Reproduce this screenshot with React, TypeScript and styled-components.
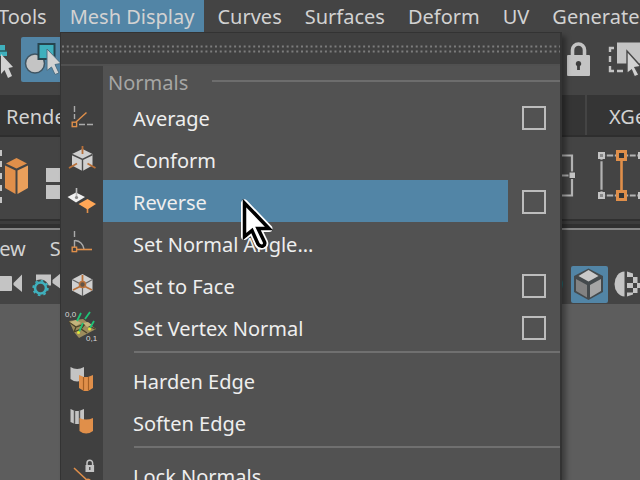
import React from 'react';
import styled, { createGlobalStyle } from 'styled-components';

const GlobalStyle = createGlobalStyle`
  * { box-sizing: border-box; }
  body { margin: 0; background: #5d5d5d; }
  button {
    margin: 0;
    padding: 0;
    border: 0;
    background: none;
    color: inherit;
    font: inherit;
    text-align: left;
    white-space: nowrap;
  }
  svg { display: block; flex: none; }
`;

const ORANGE = '#e08f4a';
const GREY = '#c4c4c4';
const TEAL = '#3fb0bd';

const Page = styled.div`
  position: relative;
  display: flex;
  flex-direction: column;
  height: 100vh;
  overflow: hidden;
  background: #5d5d5d;
  color: #d2d2d2;
  font-family: 'Noto Sans', 'Open Sans', sans-serif;
  font-size: 20px;
  line-height: 28px;
`;

const MenuBar = styled.nav`
  display: flex;
  flex: none;
  gap: 3px;
  height: 33px;
  margin-left: -12px;
  background: #444444;
`;

const MenuBarItem = styled.button<{ $open?: boolean }>`
  flex: none;
  height: 32px;
  padding: 2px 10px 0;
  background: ${(p) => (p.$open ? '#5285a6' : 'transparent')};
`;

const Bar = styled.div<{ $height: number }>`
  display: flex;
  flex: none;
  justify-content: space-between;
  height: ${(p) => p.$height}px;
  background: #444444;
`;

const Cluster = styled.div`
  display: flex;
  flex: none;
`;

const Tabs = styled.div`
  display: flex;
  flex: none;
  gap: 2px;
  height: 42px;
  background: #444444;
  border-bottom: 2px solid #2e2e2e;
  overflow: hidden;
`;

const Tab = styled.button<{ $grow?: boolean }>`
  flex: ${(p) => (p.$grow ? '1 1 auto' : '0 0 53px')};
  min-width: 0;
  padding: 4px 0 0 ${(p) => (p.$grow ? 6 : 22)}px;
  overflow: hidden;
  background: #353535;
`;

const Divider = styled.div`
  flex: none;
  height: 11px;
  background: #3c3c3c;
  border-top: 2px solid #303030;
  border-bottom: 2px solid #858585;
  box-shadow: inset 0 -4px 0 #303030;
`;

const PanelMenu = styled.nav`
  display: flex;
  flex: none;
  gap: 24px;
  height: 35px;
  margin-left: -18px;
  padding-top: 2px;
  background: #444444;
`;

const Dropdown = styled.section`
  position: absolute;
  top: 32px;
  bottom: 0;
  left: 60px;
  width: 502px;
  overflow: hidden;
  border: solid #333333;
  border-width: 1px 2px 0 1px;
  background: #404040;
  box-shadow: 4px 4px 5px rgba(0, 0, 0, 0.35);
  color: #eeeeee;
`;

const TearOff = styled.button`
  display: block;
  width: 100%;
  height: 31px;
`;

const MenuBody = styled.div`
  border-top: 2px solid #505050;
  background: linear-gradient(to right, #404040 42px, #525252 42px);
`;

const GroupTitle = styled.h2`
  display: flex;
  gap: 24px;
  height: 30px;
  margin: 0;
  padding: 3px 0 0 47px;
  color: #a6a6a4;
  font-size: 20px;
  font-weight: 400;
  line-height: 28px;

  &::after {
    content: '';
    flex: 1;
    height: 2px;
    margin-top: 11px;
    background: #6d6d6d;
  }
`;

const Row = styled.div`
  display: grid;
  grid-template-columns: 42px 1fr 52px;
  align-items: center;
  height: 42px;
`;

const Command = styled.button<{ $hot?: boolean }>`
  height: 42px;
  padding: 4px 0 0 30px;
  background: ${(p) => (p.$hot ? '#5285a6' : 'transparent')};
`;

const OptionBox = styled.button`
  justify-self: center;
  width: 24px;
  height: 24px;
  margin-top: 2px;
  border: 2px solid #bdbdbd;
`;

const Separator = styled.hr`
  height: 2px;
  margin: 0 0 0 73px;
  border: 0;
  background: #707070;
`;

const SeparatorSlot = styled.div`
  height: 11px;
  padding-top: 3px;
`;

const Pointer = styled.svg`
  position: absolute;
  top: 196px;
  left: 238px;
  pointer-events: none;
`;

function Glyph({ children }: { children: React.ReactNode }) {
  return (
    <svg width="42" height="42" viewBox="0 0 42 42" aria-hidden="true">
      {children}
    </svg>
  );
}

const HEX = 'M21.5 11 L31.5 16 V27.5 L21.5 33 L11 27.5 V16 Z';

const AverageIcon = () => (
  <Glyph>
    <path d="M13.5 10v6M13.5 18v5M18 28.5h6M26 28.5h6" stroke="#aaaaaa" strokeWidth="1.4" />
    <path d="M15 26L25.5 16.5" stroke={ORANGE} strokeWidth="1.4" />
    <rect x="11.2" y="26.2" width="4.4" height="4.4" fill="#404040" stroke={ORANGE} strokeWidth="1.4" />
  </Glyph>
);

const ConformIcon = () => (
  <Glyph>
    <path d={HEX} fill="#d0d0d0" />
    <path d="M11 16.5L21.5 21.5L31.5 16.5M21.5 21.5V33" stroke="#4a4a4a" strokeWidth="1.4" fill="none" />
    <path d="M21.5 8v8M8 30l8-4.5M34.5 30l-8-4.5" stroke="#b9713a" strokeWidth="1.8" />
  </Glyph>
);

const ReverseIcon = () => (
  <Glyph>
    <path d="M6.5 17L15 12.5L24 17L15 22.5Z" fill="#f0f0f0" />
    <path d="M15.5 8v9" stroke="#bbbbbb" strokeWidth="1.6" />
    <circle cx="15.5" cy="17.5" r="1.6" fill="#888888" />
    <path d="M26.5 26v7" stroke={ORANGE} strokeWidth="1.6" />
    <path d="M17.5 24L26.5 19L35 24L26.5 29.5Z" fill="#ffa757" />
  </Glyph>
);

const AngleIcon = () => (
  <Glyph>
    <path d="M13.5 9v6M13.5 18v7" stroke="#aaaaaa" strokeWidth="1.4" />
    <path d="M14 18.5C19 19 22 22 23 27" stroke="#aaaaaa" strokeWidth="1.4" fill="none" />
    <path d="M16 27.5h15" stroke={ORANGE} strokeWidth="1.6" />
    <rect x="11.2" y="25.2" width="4.4" height="4.4" fill="#404040" stroke={ORANGE} strokeWidth="1.4" />
  </Glyph>
);

const FaceIcon = () => (
  <Glyph>
    <path d="M21.5 10L31.5 15.5V26.5L21.5 32L11 26.5V15.5Z" fill="#d0d0d0" />
    <path d="M11 15.5L21.5 21L31.5 15.5M21.5 21V32" stroke="#666666" strokeWidth="1.2" fill="none" />
    <path d="M21.5 11v7M19 22.5l-7 3.5M24 22.5l7 3.5" stroke="#b9713a" strokeWidth="1.8" />
    <circle cx="21.5" cy="20.5" r="3" fill="#625548" stroke="#b9713a" strokeWidth="1.6" />
  </Glyph>
);

const VertexIcon = () => (
  <Glyph>
    <path d="M8 15L22 13L35 23L18 32L13 26Z" fill="#9c8c5c" />
    <path d="M8 16l7 5l9-3l10 5M13 26l7-3l6 4M15 21l-2 5M24 18l-4 5" stroke="#4b4329" strokeWidth="1.3" fill="none" />
    <path d="M9 16l6-2l5 3l-5 3ZM22 17l5-1l4 3l-5 2Z" fill="#c4b47c" />
    <path d="M16 15l4-8M24 13l5-7M18 26l4-9M29 22l4-7" stroke="#20c477" strokeWidth="1.8" />
    <circle cx="17.5" cy="26.5" r="1.5" fill="#e4e53a" />
    <circle cx="28.5" cy="23" r="1.5" fill="#e4e53a" />
    <text x="4" y="11" fill="#d8d8d8" fontSize="8" fontFamily="Liberation Sans, sans-serif">0,0</text>
    <text x="25" y="35" fill="#d8d8d8" fontSize="8" fontFamily="Liberation Sans, sans-serif">0,1</text>
  </Glyph>
);

const HardenIcon = () => (
  <Glyph>
    <path d="M9.5 8Q16 12 23 8V20Q16 25 9.5 20Z" fill={GREY} />
    <path d="M18 16L23 18L27 18L32 16V29L27 32H23L18 29Z" fill={ORANGE} />
    <path d="M22.5 18v13.5M27.5 18v13.5" stroke="#a45f25" strokeWidth="1.2" />
  </Glyph>
);

const SoftenIcon = () => (
  <Glyph>
    <path d="M9.5 8L14 10H18L23 8V21L18 23H14L9.5 21Z" fill={GREY} />
    <path d="M13.5 9v14M18.5 9v14" stroke="#555555" strokeWidth="1.4" />
    <path d="M18.5 17Q25 20 32 17V30Q25 35 18.5 30Z" fill={ORANGE} />
  </Glyph>
);

const LockNormalsIcon = () => (
  <Glyph>
    <path d="M13 14L28 28" stroke={ORANGE} strokeWidth="1.5" />
    <circle cx="27" cy="27.5" r="3" fill={ORANGE} />
    <path d="M26 12v-3a2.8 2.8 0 0 1 5.6 0v3" stroke={GREY} strokeWidth="1.5" fill="none" />
    <rect x="24.5" y="11" width="8.6" height="7" fill={GREY} />
    <rect x="28" y="13" width="1.5" height="3" fill="#555555" />
  </Glyph>
);

type Entry = { label: string; icon: () => React.ReactElement; option?: boolean; hot?: boolean };

const groups: Entry[][] = [
  [
    { label: 'Average', icon: AverageIcon, option: true },
    { label: 'Conform', icon: ConformIcon },
    { label: 'Reverse', icon: ReverseIcon, option: true, hot: true },
    { label: 'Set Normal Angle...', icon: AngleIcon },
    { label: 'Set to Face', icon: FaceIcon, option: true },
    { label: 'Set Vertex Normal', icon: VertexIcon, option: true },
  ],
  [
    { label: 'Harden Edge', icon: HardenIcon },
    { label: 'Soften Edge', icon: SoftenIcon },
  ],
  [{ label: 'Lock Normals', icon: LockNormalsIcon }],
];

const menus = ['Tools', 'Mesh Display', 'Curves', 'Surfaces', 'Deform', 'UV', 'Generate'];

function SelectionTools() {
  return (
    <svg width="64" height="62" viewBox="0 33 64 62" aria-hidden="true">
      <path d="M0 45h5v6h2v5H0Z" fill={TEAL} />
      <path d="M0 51h7" stroke="#2d5d62" strokeWidth="1.5" />
      <path d="M1 54L13 67L8.5 68L12 76L8 78L4.5 70L1 74Z" fill="#d2d2d2" />
      <rect x="21" y="37" width="50" height="45" rx="2" fill="#5285a6" />
      <circle cx="35" cy="63.5" r="9.5" fill={GREY} stroke="#3f5563" strokeWidth="1.5" />
      <rect x="38.5" y="44" width="16" height="15" fill={TEAL} stroke="#26444e" strokeWidth="2" />
      <path d="M47 49L61 63.5L55 64.5L59 73L55 74.5L51.5 67L47 70.5Z" fill="#d2d2d2" stroke="#4c6f84" strokeWidth="1" />
    </svg>
  );
}

function LockTools() {
  return (
    <svg width="80" height="62" viewBox="560 33 80 62" aria-hidden="true">
      <path d="M572.5 57v-7a6 6 0 0 1 12 0v7" fill="none" stroke={GREY} strokeWidth="3.6" />
      <rect x="567" y="55" width="23" height="21" rx="1" fill={GREY} />
      <path d="M578.5 61a2.8 2.8 0 0 1 1.4 5.2V70h-2.8v-3.8A2.8 2.8 0 0 1 578.5 61Z" fill="#3d3d3d" />
      <path d="M614 48H610V52M610 56v6M610 66v5h4M617 71h6" fill="none" stroke={GREY} strokeWidth="2.4" />
      <rect x="617" y="42.5" width="23" height="21" fill={GREY} />
      <path d="M627 51L641 66.5L635 67.5L639 75L634.5 77L631.5 70L627 73.5Z" fill="#d2d2d2" stroke="#484848" strokeWidth="1.4" />
    </svg>
  );
}

function ShelfLeft() {
  return (
    <svg width="64" height="82" viewBox="0 137 64 82" aria-hidden="true">
      <path d="M0 150h2v6H0ZM0 161h2v6H0ZM0 173h2v6H0ZM0 185h2v6H0ZM0 197h2v6H0Z" fill={GREY} />
      <path d="M16.5 158L27 163.5L16.5 168.5L6 163.5Z" fill={ORANGE} />
      <path d="M5 165.5L15.5 170.5V194L5 188Z" fill={ORANGE} />
      <path d="M28 165.5L17.5 170.5V194L28 188Z" fill="#eba05b" />
      <rect x="46" y="168" width="16" height="14" fill={GREY} />
      <rect x="46" y="185" width="16" height="14" fill={GREY} />
    </svg>
  );
}

function ShelfRight() {
  return (
    <svg width="80" height="82" viewBox="560 137 80 82" aria-hidden="true">
      <path d="M560 155.5h12V195.5h-12M560 175.5h12M601 155.5h39M601 195.5h39M601.5 156v40" fill="none" stroke="#b2b2b2" strokeWidth="2.2" />
      <path d="M621.5 156v40" stroke={ORANGE} strokeWidth="2.6" />
      <path d="M569 172h6.5v6.5H569Z" fill={GREY} stroke="#404040" strokeWidth="1" />
      <g fill="#888888" stroke={GREY} strokeWidth="2">
        <rect x="599" y="153" width="5" height="5" />
        <rect x="599" y="193" width="5" height="5" />
        <rect x="639" y="153" width="5" height="5" />
        <rect x="639" y="193" width="5" height="5" />
      </g>
      <path d="M606 152v7M606 192v7M614 152v7M614 192v7M629 152v7M629 192v7M636.5 152v7M636.5 192v7M598 160.5h7M598 190.5h7" stroke="#444444" strokeWidth="1.6" />
      <g fill="#353535" stroke={ORANGE} strokeWidth="3">
        <rect x="617.5" y="151.5" width="8" height="8" />
        <rect x="617.5" y="191.5" width="8" height="8" />
      </g>
    </svg>
  );
}

function CameraTools() {
  return (
    <svg width="64" height="39" viewBox="0 265 64 39" aria-hidden="true">
      <rect x="-6" y="276" width="18" height="15" rx="1" fill={GREY} />
      <path d="M13.5 283L22 274.5V292L13.5 285Z" fill={GREY} />
      <rect x="36" y="274.5" width="15" height="11" fill={GREY} />
      <path d="M52.5 280L61 273V289L52.5 283Z" fill={GREY} />
      <circle cx="40.5" cy="288" r="8.5" fill="#444444" />
      <circle cx="40.5" cy="288" r="5.5" fill="none" stroke={TEAL} strokeWidth="2.6" />
      <circle cx="40.5" cy="288" r="7.3" fill="none" stroke={TEAL} strokeWidth="1.8" strokeDasharray="2.7 3.03" />
    </svg>
  );
}

function ShadingTools() {
  return (
    <svg width="80" height="39" viewBox="560 265 80 39" aria-hidden="true">
      <path d="M560 277q6 7 0 15Z" fill="#1f6d74" />
      <rect x="571" y="266" width="37" height="37" rx="2" fill="#5285a6" />
      <path d="M588.5 268.5L603 276V292L588.5 300L574 292V276Z" fill="#444a4d" />
      <path d="M588.5 270L598.5 276L588.5 281.5L578.5 276Z" fill="#c9c9c9" />
      <path d="M576 279L587 285V297.5L576 291Z" fill="#828282" />
      <path d="M601 279L590 285V297.5L601 291Z" fill="#a5a5a5" />
      <path d="M624.5 271.5a10 12.5 0 0 0 0 25Z" fill={GREY} />
      <path d="M627 271.5l6 2v3.500h-6ZM633 277h4.500v6H633ZM627 283h6v5h-6ZM637 283h3v5h-3ZM633 288h4.500v5H633ZM627 292.500h6v2l-6 2Z" fill={GREY} />
    </svg>
  );
}

export default function App() {
  return (
    <>
      <GlobalStyle />
      <Page>
        <MenuBar aria-label="Main menu">
          {menus.map((name) => (
            <MenuBarItem key={name} $open={name === 'Mesh Display'}>
              {name}
            </MenuBarItem>
          ))}
        </MenuBar>
        <Bar $height={62}>
          <Cluster><SelectionTools /></Cluster>
          <Cluster><LockTools /></Cluster>
        </Bar>
        <Tabs>
          <Tab $grow>Rendering</Tab>
          <Tab>XGen</Tab>
        </Tabs>
        <Bar $height={82}>
          <Cluster><ShelfLeft /></Cluster>
          <Cluster><ShelfRight /></Cluster>
        </Bar>
        <Divider />
        <PanelMenu aria-label="Panel menu">
          <button>View</button>
          <button>Shading</button>
        </PanelMenu>
        <Bar $height={39}>
          <Cluster><CameraTools /></Cluster>
          <Cluster><ShadingTools /></Cluster>
        </Bar>

        <Dropdown aria-label="Mesh Display">
          <TearOff aria-label="Tear off menu">
            <svg width="100%" height="10" aria-hidden="true">
              <path d="M1 2.5H2000M1 7.5H2000" stroke="#7c7c7c" strokeWidth="2" strokeDasharray="2 2.78" />
            </svg>
          </TearOff>
          <MenuBody>
            <GroupTitle>Normals</GroupTitle>
            {groups.map((entries, index) => (
              <React.Fragment key={entries[0].label}>
                {index > 0 && (
                  <SeparatorSlot>
                    <Separator />
                  </SeparatorSlot>
                )}
                {entries.map(({ label, icon: Icon, option, hot }) => (
                  <Row key={label}>
                    <Icon />
                    <Command $hot={hot}>{label}</Command>
                    {option && <OptionBox aria-label={`${label} options`} />}
                  </Row>
                ))}
              </React.Fragment>
            ))}
          </MenuBody>
        </Dropdown>

        <Pointer width="40" height="56" viewBox="238 196 40 56" aria-hidden="true">
          <path
            d="M244.5 203V236.5L252 230.500L258 244Q260 247 263 246Q265.500 244.500 264.500 242L258 228.500H269Z"
            fill="#ffffff"
            stroke="#ffffff"
            strokeWidth="7"
            strokeLinejoin="round"
          />
          <path
            d="M244.500 203V236.500L252 230.500L258 244Q260 247 263 246Q265.500 244.500 264.500 242L258 228.500H269Z"
            fill="#ffffff"
            stroke="#000000"
            strokeWidth="3.500"
          />
        </Pointer>
      </Page>
    </>
  );
}
